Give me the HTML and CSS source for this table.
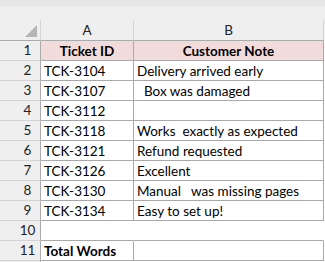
FILE: index.html
```html
<!DOCTYPE html>
<html>
<head>
<meta charset="utf-8">
<link rel="stylesheet" href="styles.css">
</head>
<body>
<div class="sheet">
  <div class="topbar"></div>
  <div class="band"></div>
  <div class="row colhead">
    <div class="rh corner"><span class="tri"></span></div>
    <div class="ch">A</div>
    <div class="ch">B</div>
  </div>
  <div class="row">
    <div class="rh">1</div>
    <div class="c hdr">Ticket ID</div>
    <div class="c hdr">Customer Note</div>
  </div>
  <div class="row">
    <div class="rh">2</div>
    <div class="c">TCK-3104</div>
    <div class="c">Delivery arrived early</div>
  </div>
  <div class="row">
    <div class="rh">3</div>
    <div class="c">TCK-3107</div>
    <div class="c">  Box was damaged</div>
  </div>
  <div class="row">
    <div class="rh">4</div>
    <div class="c">TCK-3112</div>
    <div class="c"></div>
  </div>
  <div class="row">
    <div class="rh">5</div>
    <div class="c">TCK-3118</div>
    <div class="c">Works  exactly as expected</div>
  </div>
  <div class="row">
    <div class="rh">6</div>
    <div class="c">TCK-3121</div>
    <div class="c">Refund requested</div>
  </div>
  <div class="row">
    <div class="rh">7</div>
    <div class="c">TCK-3126</div>
    <div class="c">Excellent</div>
  </div>
  <div class="row">
    <div class="rh">8</div>
    <div class="c">TCK-3130</div>
    <div class="c">Manual   was missing pages</div>
  </div>
  <div class="row">
    <div class="rh">9</div>
    <div class="c">TCK-3134</div>
    <div class="c">Easy to set up!</div>
  </div>
  <div class="row">
    <div class="rh">10</div>
    <div class="c empty"></div>
    <div class="c empty"></div>
  </div>
  <div class="row">
    <div class="rh">11</div>
    <div class="c bold">Total Words</div>
    <div class="c"></div>
  </div>
  <div class="row">
    <div class="rh"></div>
    <div class="c blank"></div>
    <div class="c blank"></div>
  </div>
</div>
</body>
</html>
```

FILE: styles.css
```css
html, body {
  margin: 0;
  padding: 0;
  background: #ffffff;
  overflow: hidden;
}
.sheet {
  width: 325px;
  height: 262px;
  overflow: hidden;
  font-family: "Lato", "Liberation Sans", sans-serif;
  font-size: 13.5px;
  color: #000;
  background: #fff;
}
.topbar {
  height: 6px;
  background: #e6e6e6;
}
.band {
  height: 14px;
  background: #efefef;
}
.row {
  display: grid;
  grid-template-columns: 41px 93px 190px;
  height: 20px;
}
.row > div {
  box-sizing: border-box;
  border-bottom: 1px solid #a9a9a9;
  border-right: 1px solid #a9a9a9;
  line-height: 19px;
  white-space: pre;
  overflow: hidden;
}
.colhead {
  height: 21px;
  background: #efefef;
}
.colhead > div {
  padding-top: 1px;
  line-height: 19px;
}
.ch {
  text-align: center;
  color: #222;
  border-bottom-color: #ababab !important;
  border-right-color: #d4d4d4 !important;
}
.rh {
  background: #efefef;
  text-align: center;
  padding-left: 15px;
  color: #222;
  border-bottom-color: #d4d4d4 !important;
  border-right-color: #ababab !important;
}
.corner {
  position: relative;
  border-bottom-color: #ababab !important;
  border-right-color: #d4d4d4 !important;
}
.tri {
  position: absolute;
  right: 3px;
  bottom: 3px;
  width: 0;
  height: 0;
  border-left: 12px solid transparent;
  border-bottom: 12px solid #b5b5b5;
}
.c {
  padding-left: 3px;
  padding-top: 1px;
}
.hdr {
  background: #f2dcdb;
  font-weight: bold;
  text-align: center;
  padding-left: 0;
}
.bold {
  font-weight: bold;
}
.c.empty {
  border-right-color: transparent;
}
.c.blank {
  border-color: transparent;
}
```
